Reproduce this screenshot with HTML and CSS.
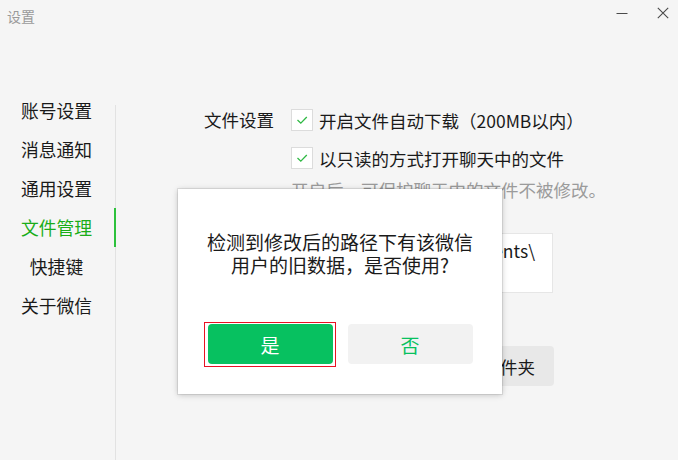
FILE: index.html
```html
<!DOCTYPE html>
<html lang="zh-CN">
<head>
<meta charset="utf-8">
<title>设置</title>
<link rel="stylesheet" href="styles.css">
</head>
<body>
<div class="window">
  <header class="titlebar">
    <span class="title">设置</span>
    <div class="controls">
      <span class="ctl">
        <svg width="12" height="12" viewBox="0 0 12 12"><line x1="0.5" y1="6.5" x2="11.5" y2="6.5" stroke="#4a4a4a" stroke-width="1"/></svg>
      </span>
      <span class="ctl">
        <svg width="12" height="12" viewBox="0 0 12 12"><path d="M0.8 0.8 L11.2 11.2 M11.2 0.8 L0.8 11.2" stroke="#4a4a4a" stroke-width="1.1" fill="none"/></svg>
      </span>
    </div>
  </header>
  <div class="main">
    <nav class="sidebar">
      <ul class="nav">
        <li class="nav-item">账号设置</li>
        <li class="nav-item">消息通知</li>
        <li class="nav-item">通用设置</li>
        <li class="nav-item active">文件管理</li>
        <li class="nav-item">快捷键</li>
        <li class="nav-item">关于微信</li>
      </ul>
      <div class="rule"></div>
    </nav>
    <section class="content">
      <div class="row">
        <div class="label">文件设置</div>
        <div class="options">
          <div class="check">
            <span class="box"><svg width="20" height="20" viewBox="0 0 20 20"><polyline points="5.5,10 8.8,13.2 14.8,7" fill="none" stroke="#2fb944" stroke-width="1.3"/></svg></span>
            <span>开启文件自动下载（200MB以内）</span>
          </div>
          <div class="check">
            <span class="box"><svg width="20" height="20" viewBox="0 0 20 20"><polyline points="5.5,10 8.8,13.2 14.8,7" fill="none" stroke="#2fb944" stroke-width="1.3"/></svg></span>
            <span>以只读的方式打开聊天中的文件</span>
          </div>
          <p class="hint">开启后，可保护聊天中的文件不被修改。</p>
        </div>
      </div>
      <div class="row manage">
        <div class="label label-top">文件管理</div>
        <div class="options">
          <div class="path"><span>C:\Users\Administrator\Documents\</span></div>
          <div class="actions">
            <button class="btn-gray">更改</button>
            <button class="btn-gray">打开文件夹</button>
          </div>
        </div>
      </div>
    </section>
  </div>

  <div class="dialog">
    <p class="dialog-text">检测到修改后的路径下有该微信<br>用户的旧数据，是否使用?</p>
    <div class="dialog-buttons">
      <span class="focus-ring"><button class="btn btn-primary">是</button></span>
      <button class="btn btn-secondary">否</button>
    </div>
  </div>
</div>
</body>
</html>
```

FILE: styles.css
```css
* { box-sizing: border-box; }
html, body {
  margin: 0;
  padding: 0;
  background: #f5f5f5;
}
body {
  font-family: "Noto Sans CJK SC", "Noto Sans", sans-serif;
  color: #1a1a1a;
}
.window {
  position: relative;
  width: 678px;
  height: 460px;
  overflow: hidden;
  background: #f5f5f5;
  display: flex;
  flex-direction: column;
}
.titlebar {
  height: 30px;
  display: flex;
  align-items: flex-start;
  justify-content: space-between;
  padding: 6px 9px 0 7px;
}
.title {
  font-size: 14px;
  line-height: 20px;
  color: #9a9a9a;
}
.controls {
  display: flex;
  gap: 29px;
  padding-top: 1px;
}
.ctl { display: block; width: 12px; height: 12px; }
.ctl svg { display: block; }

.main {
  flex: 1;
  display: flex;
  margin-top: 61px;
}
.sidebar {
  display: flex;
  width: 116px;
}
.nav {
  list-style: none;
  margin: 0;
  padding: 0;
  width: 115px;
}
.nav-item {
  position: relative;
  height: 39px;
  line-height: 39px;
  font-size: 17.8px;
  text-align: center;
  padding-right: 2px;
  color: #1a1a1a;
}
.nav-item.active { color: #1aad19; }
.nav-item.active::after {
  content: "";
  position: absolute;
  top: 0;
  bottom: 0;
  right: -1px;
  width: 2px;
  background: #2dc13c;
  z-index: 2;
}
.rule {
  width: 1px;
  margin-top: 14px;
  background: #e2e2e2;
}

.content {
  flex: 1;
  padding: 10px 0 0 88px;
  font-size: 17.5px;
}
.row {
  display: flex;
}
.label {
  width: 87px;
  line-height: 38px;
  color: #1a1a1a;
}
.options {
  width: 263px;
  display: flex;
  flex-direction: column;
}
.check {
  display: flex;
  align-items: center;
  height: 38px;
  gap: 6px;
  white-space: nowrap;
}
.box {
  width: 22px;
  height: 22px;
  background: #fff;
  border: 1px solid #dcdcdc;
  display: flex;
  align-items: center;
  justify-content: center;
}
.box svg { display: block; }
.hint {
  margin: 0;
  line-height: 26px;
  color: #9b9b9b;
  white-space: nowrap;
}
.manage {
  margin-top: 30px;
}
.label-top { line-height: 34px; }
.path {
  width: 262px;
  height: 60px;
  background: #fff;
  border: 1px solid #e6e6e6;
  display: flex;
  justify-content: flex-end;
  overflow: hidden;
  padding: 4px 17px 0 8px;
  line-height: 26px;
  white-space: nowrap;
}
.actions {
  margin-top: 53px;
  display: flex;
  justify-content: flex-end;
  gap: 12px;
}
.btn-gray {
  height: 40px;
  border: none;
  border-radius: 4px;
  background: #e8e8e8;
  font-family: inherit;
  font-size: 17.5px;
  color: #1a1a1a;
  padding: 0 19px;
}

.dialog {
  position: absolute;
  left: 178px;
  top: 189px;
  width: 324px;
  height: 205px;
  background: #fff;
  box-shadow: 0 0 0 1px rgba(0,0,0,0.08), 0 1px 6px rgba(0,0,0,0.22);
  padding: 41px 20px 0;
  display: flex;
  flex-direction: column;
}
.dialog-text {
  margin: 0;
  text-align: center;
  font-size: 19px;
  line-height: 23px;
  color: #1a1a1a;
}
.dialog-buttons {
  margin-top: auto;
  margin-bottom: 30px;
  display: flex;
  justify-content: center;
  gap: 15px;
}
.focus-ring {
  display: flex;
  border: 1px solid #e81123;
  padding: 1px 2px 2px 3px;
  margin: -2px -3px -3px -4px;
}
.btn {
  width: 125px;
  height: 40px;
  border: none;
  border-radius: 4px;
  font-family: inherit;
  font-size: 19px;
  padding: 0;
}
.btn-primary {
  background: #07c160;
  color: #fff;
}
.btn-secondary {
  background: #f2f2f2;
  color: #07c160;
}
```
